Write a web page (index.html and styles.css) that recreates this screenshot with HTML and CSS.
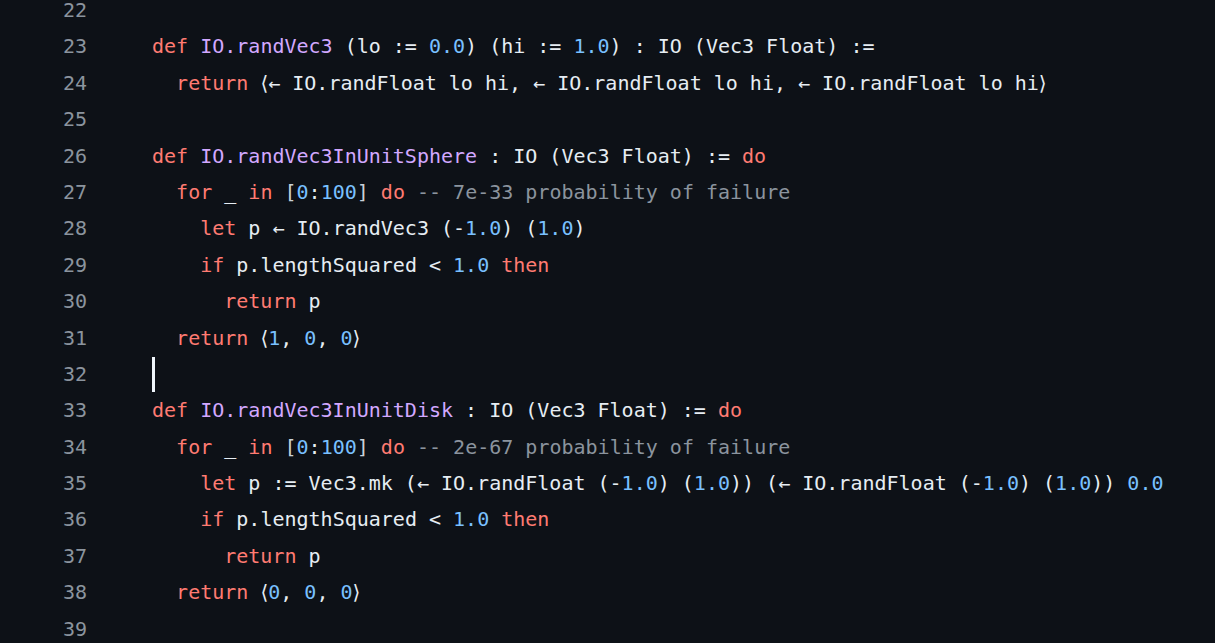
FILE: index.html
```html
<!DOCTYPE html>
<html>
<head>
<meta charset="utf-8">
<link rel="stylesheet" href="styles.css">
</head>
<body>
<div class="code">
  <div class="row"><span class="ln">22</span><span class="src"></span></div>
  <div class="row"><span class="ln">23</span><span class="src"><span class="kw">def</span> <span class="fn">IO.randVec3</span> (lo := <span class="num">0.0</span>) (hi := <span class="num">1.0</span>) : IO (Vec3 Float) :=</span></div>
  <div class="row"><span class="ln">24</span><span class="src">  <span class="kw">return</span> <span class="ab">⟨</span>← IO.randFloat lo hi, ← IO.randFloat lo hi, ← IO.randFloat lo hi<span class="ab">⟩</span></span></div>
  <div class="row"><span class="ln">25</span><span class="src"></span></div>
  <div class="row"><span class="ln">26</span><span class="src"><span class="kw">def</span> <span class="fn">IO.randVec3InUnitSphere</span> : IO (Vec3 Float) := <span class="kw">do</span></span></div>
  <div class="row"><span class="ln">27</span><span class="src">  <span class="kw">for</span> _ <span class="kw">in</span> <span class="br">[</span><span class="num">0</span>:<span class="num">100</span><span class="br">]</span> <span class="kw">do</span> <span class="cm">-- 7e-33 probability of failure</span></span></div>
  <div class="row"><span class="ln">28</span><span class="src">    <span class="kw">let</span> p ← IO.randVec3 (-<span class="num">1.0</span>) (<span class="num">1.0</span>)</span></div>
  <div class="row"><span class="ln">29</span><span class="src">    <span class="kw">if</span> p.lengthSquared &lt; <span class="num">1.0</span> <span class="kw">then</span></span></div>
  <div class="row"><span class="ln">30</span><span class="src">      <span class="kw">return</span> p</span></div>
  <div class="row"><span class="ln">31</span><span class="src">  <span class="kw">return</span> <span class="ab">⟨</span><span class="num">1</span>, <span class="num">0</span>, <span class="num">0</span><span class="ab">⟩</span></span></div>
  <div class="row"><span class="ln">32</span><span class="src"><span class="caret"></span></span></div>
  <div class="row"><span class="ln">33</span><span class="src"><span class="kw">def</span> <span class="fn">IO.randVec3InUnitDisk</span> : IO (Vec3 Float) := <span class="kw">do</span></span></div>
  <div class="row"><span class="ln">34</span><span class="src">  <span class="kw">for</span> _ <span class="kw">in</span> <span class="br">[</span><span class="num">0</span>:<span class="num">100</span><span class="br">]</span> <span class="kw">do</span> <span class="cm">-- 2e-67 probability of failure</span></span></div>
  <div class="row"><span class="ln">35</span><span class="src">    <span class="kw">let</span> p := Vec3.mk (← IO.randFloat (-<span class="num">1.0</span>) (<span class="num">1.0</span>)) (← IO.randFloat (-<span class="num">1.0</span>) (<span class="num">1.0</span>)) <span class="num">0.0</span></span></div>
  <div class="row"><span class="ln">36</span><span class="src">    <span class="kw">if</span> p.lengthSquared &lt; <span class="num">1.0</span> <span class="kw">then</span></span></div>
  <div class="row"><span class="ln">37</span><span class="src">      <span class="kw">return</span> p</span></div>
  <div class="row"><span class="ln">38</span><span class="src">  <span class="kw">return</span> <span class="ab">⟨</span><span class="num">0</span>, <span class="num">0</span>, <span class="num">0</span><span class="ab">⟩</span></span></div>
  <div class="row"><span class="ln">39</span><span class="src"></span></div>
</div>
</body>
</html>
```
FILE: styles.css
```css
html, body {
  margin: 0;
  padding: 0;
  background: #0d1117;
  overflow: hidden;
}
.code {
  margin-top: -8px;
  font-family: "DejaVu Sans Mono", monospace;
  font-size: 20px;
  line-height: 36.4px;
  color: #e6edf3;
}
.row {
  display: grid;
  grid-template-columns: 87px 1fr;
  column-gap: 65px;
  height: 36.4px;
}
.ln {
  text-align: right;
  color: #8b949e;
}
.src {
  white-space: pre;
  position: relative;
}
.kw { color: #ff7b72; }
.fn { color: #d2a8ff; }
.num { color: #79c0ff; }
.cm { color: #8b949e; }
.br { color: #c9d1d9; }
.ab {
  font-family: "DejaVu Sans", sans-serif;
}
.caret {
  position: absolute;
  left: 0;
  top: 1px;
  width: 3px;
  height: 35px;
  background: #f0f6fc;
}
```
